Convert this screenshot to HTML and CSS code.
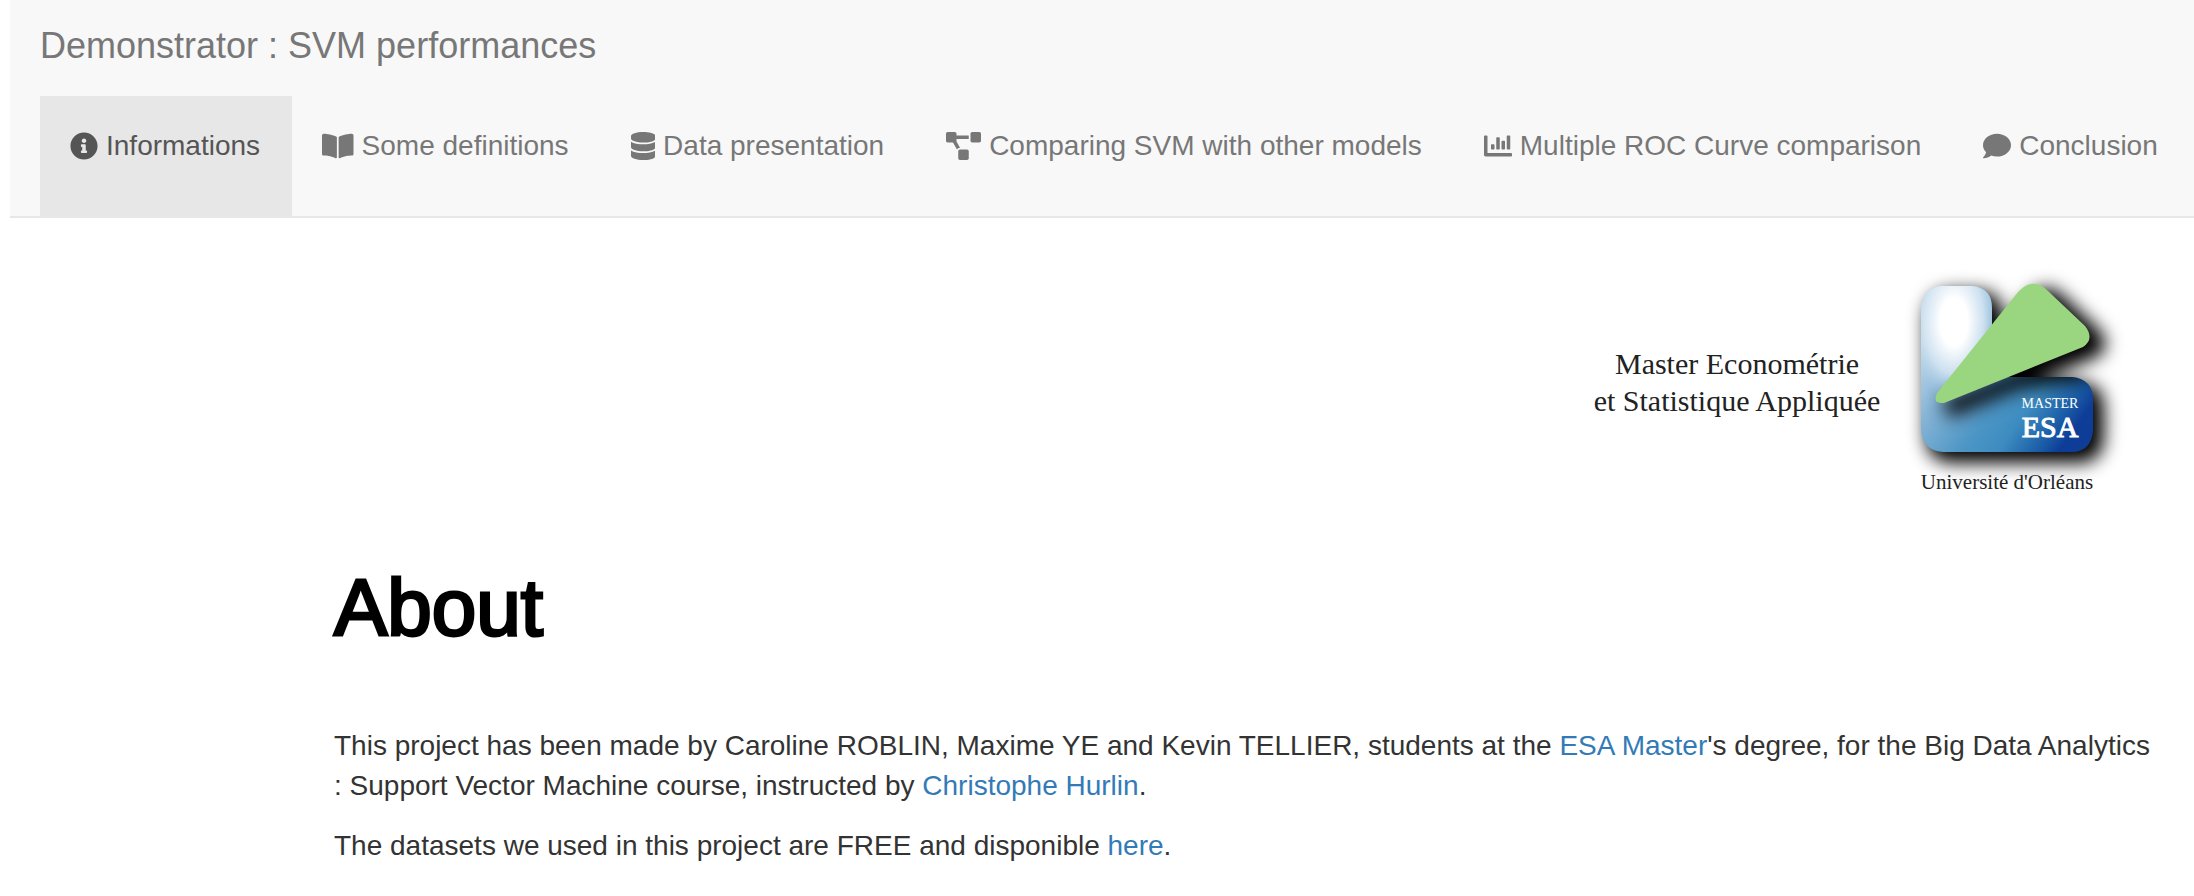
FILE: index.html
```html
<!DOCTYPE html>
<html lang="en">
<head>
<meta charset="utf-8">
<title>Demonstrator : SVM performances</title>
<link rel="stylesheet" href="styles.css">
</head>
<body>
<header class="navbar">
  <span class="brand">Demonstrator : SVM performances</span>
  <nav class="tabs">
    <a class="tab active" href="#informations"><svg class="icon" viewBox="0 0 512 512" aria-hidden="true"><path d="M256 8C119.043 8 8 119.083 8 256c0 136.997 111.043 248 248 248s248-111.003 248-248C504 119.083 392.957 8 256 8zm0 110c23.196 0 42 18.804 42 42s-18.804 42-42 42-42-18.804-42-42 18.804-42 42-42zm56 254c0 6.627-5.373 12-12 12h-88c-6.627 0-12-5.373-12-12v-24c0-6.627 5.373-12 12-12h12v-64h-12c-6.627 0-12-5.373-12-12v-24c0-6.627 5.373-12 12-12h64c6.627 0 12 5.373 12 12v100h12c6.627 0 12 5.373 12 12v24z"/></svg>Informations</a>
    <a class="tab" href="#definitions"><svg class="icon" viewBox="0 0 576 512" aria-hidden="true"><path d="M542.22 32.05c-54.8 3.11-163.72 14.43-230.96 55.59-4.64 2.84-7.27 7.89-7.27 13.17v363.87c0 11.55 12.63 18.85 23.28 13.49 69.18-34.82 169.23-44.32 218.7-46.92 16.89-.89 30.02-14.43 30.02-30.66V62.75c.01-17.71-15.35-31.74-33.77-30.7zM264.73 87.64C197.5 46.48 88.58 35.17 33.78 32.05 15.36 31.01 0 45.04 0 62.75V400.6c0 16.24 13.13 29.78 30.02 30.66 49.49 2.6 149.59 12.11 218.77 46.95 10.62 5.35 23.21-1.94 23.21-13.46V100.63c0-5.29-2.62-10.14-7.27-12.99z"/></svg>Some definitions</a>
    <a class="tab" href="#data"><svg class="icon" viewBox="0 0 448 512" aria-hidden="true"><path d="M448 73.143v45.714C448 159.143 347.667 192 224 192S0 159.143 0 118.857V73.143C0 32.857 100.333 0 224 0s224 32.857 224 73.143zM448 176v102.857C448 319.143 347.667 352 224 352S0 319.143 0 278.857V176c48.125 33.143 136.208 48.572 224 48.572S399.874 209.143 448 176zm0 160v102.857C448 479.143 347.667 512 224 512S0 479.143 0 438.857V336c48.125 33.143 136.208 48.572 224 48.572S399.874 369.143 448 336z"/></svg>Data presentation</a>
    <a class="tab" href="#models"><svg class="icon" viewBox="0 0 640 512" aria-hidden="true"><path d="M384 320H256c-17.67 0-32 14.33-32 32v128c0 17.67 14.33 32 32 32h128c17.67 0 32-14.33 32-32V352c0-17.67-14.33-32-32-32zM192 32c0-17.67-14.33-32-32-32H32C14.33 0 0 14.33 0 32v128c0 17.67 14.33 32 32 32h95.72l73.16 128.04C211.98 300.98 232.4 288 256 288h.28L192 175.51V128h224V64H192V32zM608 0H480c-17.67 0-32 14.33-32 32v128c0 17.67 14.33 32 32 32h128c17.67 0 32-14.33 32-32V32c0-17.67-14.33-32-32-32z"/></svg>Comparing SVM with other models</a>
    <a class="tab" href="#roc"><svg class="icon" viewBox="0 0 512 512" aria-hidden="true"><path d="M332.800 320h38.400c6.400 0 12.800-6.400 12.800-12.800V172.800c0-6.400-6.400-12.800-12.800-12.800h-38.400c-6.400 0-12.800 6.400-12.800 12.800v134.400c0 6.400 6.400 12.800 12.800 12.800zm96 0h38.400c6.400 0 12.800-6.400 12.800-12.800V76.800c0-6.400-6.400-12.800-12.800-12.800h-38.400c-6.400 0-12.800 6.400-12.800 12.800v230.400c0 6.400 6.400 12.800 12.800 12.800zm-288 0h38.400c6.400 0 12.800-6.400 12.800-12.800v-70.400c0-6.400-6.400-12.800-12.800-12.800h-38.400c-6.400 0-12.800 6.400-12.800 12.800v70.400c0 6.400 6.400 12.800 12.800 12.800zm96 0h38.400c6.400 0 12.800-6.400 12.800-12.800V108.800c0-6.400-6.400-12.800-12.800-12.800h-38.400c-6.400 0-12.800 6.400-12.800 12.800v198.400c0 6.400 6.400 12.800 12.800 12.800zM496 384H64V80c0-8.840-7.160-16-16-16H16C7.160 64 0 71.160 0 80v336c0 17.670 14.330 32 32 32h464c8.840 0 16-7.160 16-16v-32c0-8.840-7.160-16-16-16z"/></svg>Multiple ROC Curve comparison</a>
    <a class="tab" href="#conclusion"><svg class="icon" viewBox="0 0 512 512" aria-hidden="true"><path d="M256 32C114.600 32 0 125.100 0 240c0 49.600 21.400 95 57 130.700C44.500 421.100 2.700 466 2.200 466.500c-2.200 2.300-2.800 5.700-1.500 8.700S4.800 480 8 480c66.300 0 116-31.800 140.600-51.400 32.700 12.300 69 19.400 107.400 19.400 141.400 0 256-93.100 256-208S397.400 32 256 32z"/></svg>Conclusion</a>
  </nav>
</header>
<main class="page">
  <div class="banner">
    <svg class="logo" viewBox="0 0 560 260" role="img" aria-label="Master Econométrie et Statistique Appliquée, Université d'Orléans">
      <defs>
        <linearGradient id="body" gradientUnits="userSpaceOnUse" x1="350" y1="80" x2="505" y2="190">
          <stop offset="0" stop-color="#c3dbec"/>
          <stop offset="0.25" stop-color="#85b3d5"/>
          <stop offset="0.5" stop-color="#4d96c6"/>
          <stop offset="0.66" stop-color="#3d8cc0"/>
          <stop offset="0.84" stop-color="#195aa6"/>
          <stop offset="0.92" stop-color="#0e3d98"/>
        </linearGradient>
        <radialGradient id="shine" gradientUnits="userSpaceOnUse" cx="0" cy="0" r="1" gradientTransform="translate(374 72) scale(46 80)">
          <stop offset="0.3" stop-color="#fff"/>
          <stop offset="0.65" stop-color="#d6e6f3" stop-opacity="0.85"/>
          <stop offset="1" stop-color="#a9cbe3" stop-opacity="0"/>
        </radialGradient>
        <filter id="soft" x="-30%" y="-30%" width="160%" height="160%"><feGaussianBlur stdDeviation="9"/></filter>
        <path id="ell" d="M361 36H392Q412 38 412 58V127H492Q513 129 513 150V181Q511 202 491 202H363Q341 200 341 178V58Q343 38 361 36Z"/>
        <path id="wedge" d="M357 143L438 42Q453 26 468 41L505 76Q515 89 503 97L364 153Q352 154 357 143Z"/>
        <clipPath id="inside"><use href="#ell"/></clipPath>
      </defs>
      <g filter="url(#soft)" stroke="#000" stroke-width="6">
        <use href="#ell" x="8" y="8"/>
        <use href="#wedge" x="13" y="7"/>
      </g>
      <use href="#ell" fill="url(#body)"/>
      <g clip-path="url(#inside)">
        <rect x="320" y="0" width="100" height="160" fill="url(#shine)"/>
        <path d="M362 150L510 92V129L440 139L370 168Z" filter="url(#soft)" opacity="0.9"/>
      </g>
      <use href="#wedge" fill="#9ad57f"/>
      <text class="logo-name" x="157" y="124">Master Econométrie</text>
      <text class="logo-name" x="157" y="161">et Statistique Appliquée</text>
      <text class="logo-master" x="470" y="158">MASTER</text>
      <text class="logo-esa" x="470" y="187">ESA</text>
      <text class="logo-place" x="427" y="239">Université d'Orléans</text>
    </svg>
  </div>
  <section class="content">
    <h1 class="title">About</h1>
    <p class="text">This project has been made by Caroline ROBLIN, Maxime YE and Kevin TELLIER, students at the <a class="link" href="#esa">ESA Master</a>'s degree, for the Big Data Analytics : Support Vector Machine course, instructed by <a class="link" href="#hurlin">Christophe Hurlin</a>.</p>
    <p class="text">The datasets we used in this project are FREE and disponible <a class="link" href="#datasets">here</a>.</p>
  </section>
</main>
</body>
</html>
```
FILE: styles.css
```css
* {
  box-sizing: border-box;
}

body {
  margin: 0;
  background: #fff;
  color: #333;
  font-family: "Liberation Sans", Arial, sans-serif;
  font-size: 28px;
  line-height: 40px;
}

.navbar {
  margin-left: 10px;
  padding: 26px 0 0 30px;
  background: #f8f8f8;
  border-bottom: 2px solid #e7e7e7;
  color: #777;
}

.brand {
  display: block;
  margin-bottom: 30px;
  font-size: 36px;
}

.tabs {
  display: flex;
}

.tab {
  display: flex;
  flex: none;
  align-items: center;
  gap: 8px;
  padding: 30px 32px 50px 30px;
  color: #777;
  text-decoration: none;
  white-space: nowrap;
}

.tab.active {
  background: #e7e7e7;
  color: #555;
}

.icon {
  height: 28px;
  fill: currentColor;
}

.banner {
  display: flex;
  justify-content: flex-end;
  padding: 32px 54px 0 0;
}

.logo {
  width: 560px;
  height: 260px;
  font-family: "Liberation Serif", "Times New Roman", serif;
  text-anchor: middle;
}

.logo-name {
  fill: #222;
  font-size: 30px;
}

.logo-master {
  fill: #fff;
  font-size: 14px;
}

.logo-esa {
  fill: #fff;
  stroke: #fff;
  stroke-width: 1px;
  font-size: 30px;
}

.logo-place {
  fill: #222;
  font-size: 21px;
}

.content {
  padding: 0 30px 16px 334px;
}

.title {
  margin: 58px 0 78px;
  color: #000;
  font-size: 80px;
  font-weight: 400;
  line-height: 80px;
  -webkit-text-stroke: 3px #000;
}

.text {
  margin: 0 0 20px;
}

.link {
  color: #337ab7;
  text-decoration: none;
}
```
